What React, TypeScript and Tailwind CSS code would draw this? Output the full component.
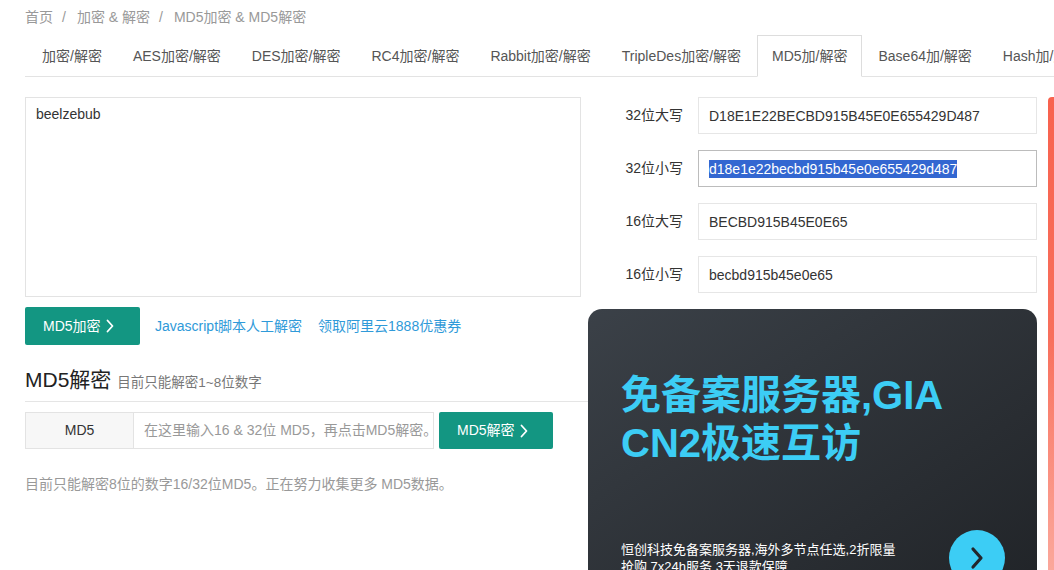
import React from "react";

const Chevron = ({ className = "" }: { className?: string }) => (
  <svg width="8" height="14" viewBox="0 0 8 14" className={className} fill="none">
    <polyline points="1.5,1.5 6.5,7 1.5,12.5" stroke="currentColor" strokeWidth="1.8" strokeLinecap="round" strokeLinejoin="round" />
  </svg>
);

const tabs = [
  "加密/解密",
  "AES加密/解密",
  "DES加密/解密",
  "RC4加密/解密",
  "Rabbit加密/解密",
  "TripleDes加密/解密",
  "MD5加/解密",
  "Base64加/解密",
  "Hash加/解密",
];

const fields = [
  { label: "32位大写", value: "D18E1E22BECBD915B45E0E655429D487" },
  { label: "32位小写", value: "d18e1e22becbd915b45e0e655429d487", focus: true },
  { label: "16位大写", value: "BECBD915B45E0E65" },
  { label: "16位小写", value: "becbd915b45e0e65" },
];

export default function App() {
  return (
    <div
      className="w-[1054px] h-[570px] overflow-hidden bg-white text-[#333] text-[14px]"
      style={{ fontFamily: '"Liberation Sans", Arial, "Noto Sans CJK SC", sans-serif' }}
    >
      <div className="pl-[25px]">
        {/* breadcrumb */}
        <div className="h-[35px] leading-[34px] text-[14px] text-[#999] flex whitespace-nowrap">
          <span>首页</span>
          <span className="pl-[9px] pr-[11px]">/</span>
          <span>加密 &amp; 解密</span>
          <span className="pl-[9px] pr-[11px]">/</span>
          <span>MD5加密 &amp; MD5解密</span>
        </div>

        {/* tabs */}
        <div className="flex border-b border-[#e3e3e3] whitespace-nowrap pl-[2px]">
          {tabs.map((t) => {
            const active = t === "MD5加/解密";
            return (
              <div key={t} className="mr-[1px] mb-[-1px] shrink-0">
                <div
                  className={
                    active
                      ? "px-[14px] py-[10px] leading-[20px] border border-[#ddd] border-b-white bg-white text-[#555]"
                      : "px-[14px] py-[10px] leading-[20px] border border-transparent text-[#555]"
                  }
                >
                  {t}
                </div>
              </div>
            );
          })}
        </div>

        {/* content */}
        <div className="flex mt-[20px]">
          {/* left */}
          <div className="w-[563px] shrink-0">
            <div className="w-[556px] h-[200px] border border-[#e3e3e3] px-[10px] pt-[6px] leading-[20px] text-[14px] text-[#333]">
              beelzebub
            </div>
            <div className="flex items-center mt-[10px] h-[38px]">
              <div className="w-[115px] h-[38px] bg-[#139682] rounded-[2px] text-white flex items-center pl-[18px] gap-[5px]">
                <span>MD5加密</span>
                <Chevron />
              </div>
              <span className="ml-[15px] text-[#2f9ad9]">Javascript脚本人工解密</span>
              <span className="ml-[16px] text-[#2f9ad9]">领取阿里云1888优惠券</span>
            </div>

            <div className="mt-[20px] pb-[3px] border-b border-[#e5e5e5] flex items-baseline leading-[30px]">
              <span className="text-[21px] text-[#222]">MD5解密</span>
              <span className="ml-[6px] text-[13.5px] text-[#777]">目前只能解密1~8位数字</span>
            </div>

            <div className="mt-[10px] flex h-[37px]">
              <div className="w-[109px] h-[37px] bg-[#f7f7f7] border border-[#e3e3e3] flex items-center justify-center text-[#333]">
                MD5
              </div>
              <div className="w-[300px] h-[37px] border border-l-0 border-[#e3e3e3] pl-[10px] flex items-center text-[#999] whitespace-nowrap overflow-hidden">
                在这里输入16 &amp; 32位 MD5，再点击MD5解密。
              </div>
              <div className="ml-[5px] w-[114px] h-[37px] bg-[#139682] rounded-[2px] text-white flex items-center pl-[18px] gap-[5px]">
                <span>MD5解密</span>
                <Chevron />
              </div>
            </div>

            <div className="mt-[25px] leading-[20px] text-[14px] text-[#999] whitespace-nowrap">
              目前只能解密8位的数字16/32位MD5。正在努力收集更多 MD5数据。
            </div>
          </div>

          {/* right */}
          <div className="w-[449px] shrink-0">
            <div className="flex flex-col gap-[16px]">
              {fields.map((f) => (
                <div key={f.label} className="flex items-center h-[37px]">
                  <div className="w-[110px] pr-[15px] text-right text-[#333]">{f.label}</div>
                  <div
                    className={
                      f.focus
                        ? "w-[339px] h-[37px] border border-[#bcbcbc] px-[10px] pt-[1px] flex items-center whitespace-nowrap"
                        : "w-[339px] h-[37px] border border-[#e6e6e6] px-[10px] pt-[1px] flex items-center whitespace-nowrap text-[#333]"
                    }
                  >
                    {f.focus ? (
                      <span className="bg-[#3367d1] text-white leading-[18px]">{f.value}</span>
                    ) : (
                      f.value
                    )}
                  </div>
                </div>
              ))}
            </div>

            <div className="mt-[16px] h-[300px] rounded-[14px] bg-linear-to-br from-[#3b4148] to-[#202327] pl-[33px] pr-[32px] pt-[62px]">
              <div className="text-[40px] leading-[48px] font-bold text-[#3ccdf5] whitespace-nowrap">
                <div>免备案服务器,GIA</div>
                <div>CN2极速互访</div>
              </div>
              <div className="mt-[63px] flex items-center justify-between">
                <div className="text-[13px] leading-[17px] text-white whitespace-nowrap">
                  <div>恒创科技免备案服务器,海外多节点任选,2折限量</div>
                  <div>抢购 7x24h服务 3天退款保障</div>
                </div>
                <div className="w-[56px] h-[56px] rounded-full bg-[#3ccdf5] flex items-center justify-center">
                  <svg width="20" height="26" viewBox="0 0 20 26" fill="none">
                    <polyline points="6,4 14,13 6,22" stroke="#23262b" strokeWidth="3.2" strokeLinecap="round" strokeLinejoin="round" />
                  </svg>
                </div>
              </div>
            </div>
          </div>

          {/* side strip */}
          <div className="ml-[11px] w-[40px] h-[480px] shrink-0 rounded-tl-[4px] bg-linear-to-b from-[#f8624e] via-[#f86f5c] to-[#fba99d]" />
        </div>
      </div>
    </div>
  );
}
